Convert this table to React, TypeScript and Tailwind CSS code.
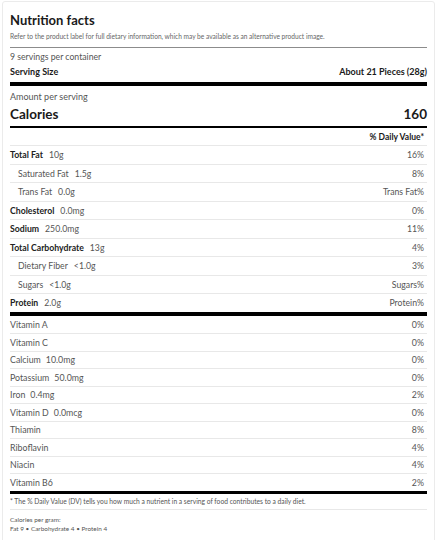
const nutrients = [
  { label: "Total Fat", amount: "10g", dv: "16%", bold: true },
  { label: "Saturated Fat", amount: "1.5g", dv: "8%", sub: true },
  { label: "Trans Fat", amount: "0.0g", dv: "Trans Fat%", sub: true },
  { label: "Cholesterol", amount: "0.0mg", dv: "0%", bold: true },
  { label: "Sodium", amount: "250.0mg", dv: "11%", bold: true },
  { label: "Total Carbohydrate", amount: "13g", dv: "4%", bold: true },
  { label: "Dietary Fiber", amount: "<1.0g", dv: "3%", sub: true },
  { label: "Sugars", amount: "<1.0g", dv: "Sugars%", sub: true },
  { label: "Protein", amount: "2.0g", dv: "Protein%", bold: true },
];

const vitamins = [
  { label: "Vitamin A", amount: "", dv: "0%" },
  { label: "Vitamin C", amount: "", dv: "0%" },
  { label: "Calcium", amount: "10.0mg", dv: "0%" },
  { label: "Potassium", amount: "50.0mg", dv: "0%" },
  { label: "Iron", amount: "0.4mg", dv: "2%" },
  { label: "Vitamin D", amount: "0.0mcg", dv: "0%" },
  { label: "Thiamin", amount: "", dv: "8%" },
  { label: "Riboflavin", amount: "", dv: "4%" },
  { label: "Niacin", amount: "", dv: "4%" },
  { label: "Vitamin B6", amount: "", dv: "2%" },
];

export default function App() {
  return (
    <div className="w-[437px] h-[540px] overflow-hidden bg-white pt-[1px] px-[2px] font-['Lato',sans-serif] text-[#555]">
      <div className="h-[600px] border border-[#ebebeb] rounded-[3px] px-[7px]">
        <h2 className="mt-[10px] text-[13px] leading-[16px] font-bold text-[#1a1a1a]">
          Nutrition facts
        </h2>
        <p className="mt-[4px] text-[6.6px] leading-[8px] text-[#666]">
          Refer to the product label for full dietary information, which may be available as an alternative product image.
        </p>
        <div className="mt-[7px] h-px bg-[#8c8c8c]" />

        <div className="mt-[3px] text-[8.7px] leading-[12px]">9 servings per container</div>
        <div className="mt-[3px] flex justify-between text-[9px] leading-[12px] font-bold text-[#1a1a1a]">
          <span>Serving Size</span>
          <span>About 21 Pieces (28g)</span>
        </div>
        <div className="mt-[4px] h-[4px] bg-black" />

        <div className="mt-[5px] text-[9px] leading-[12px]">Amount per serving</div>
        <div className="mt-[3px] flex justify-between text-[13.5px] leading-[16px] font-bold text-[#1a1a1a]">
          <span>Calories</span>
          <span>160</span>
        </div>
        <div className="mt-[4px] h-[2px] bg-black" />

        <div className="mt-[3px] text-right text-[8.5px] leading-[12px] font-bold text-[#1a1a1a] pr-[3px]">
          % Daily Value*
        </div>

        <div className="mt-[2px]">
          {nutrients.map((n) => (
            <div
              key={n.label}
              className="h-[18.5px] border-t border-[#e8e8e8] flex items-center justify-between text-[8.7px] pr-[3px]"
            >
              <span className={n.sub ? "pl-[8px]" : ""}>
                <span className={n.bold ? "font-bold text-[#222]" : ""}>{n.label}</span>
                <span className="ml-[6px]">{n.amount}</span>
              </span>
              <span>{n.dv}</span>
            </div>
          ))}
        </div>
        <div className="h-[4px] bg-black" />

        <div>
          {vitamins.map((v, i) => (
            <div
              key={v.label}
              className={
                "h-[17.5px] flex items-center justify-between text-[8.8px] pr-[3px] " +
                (i > 0 ? "border-t border-[#e8e8e8]" : "")
              }
            >
              <span>
                {v.label}
                {v.amount && <span className="ml-[5px]">{v.amount}</span>}
              </span>
              <span>{v.dv}</span>
            </div>
          ))}
        </div>
        <div className="h-[3px] bg-black" />

        <div className="h-[16px] flex items-center text-[6.7px] border-b border-[#e8e8e8]">
          * The % Daily Value (DV) tells you how much a nutrient in a serving of food contributes to a daily diet.
        </div>
        <div className="mt-[5px] text-[6.4px] leading-[9px]">
          <div>Calories per gram:</div>
          <div>Fat 9 • Carbohydrate 4 • Protein 4</div>
        </div>
      </div>
    </div>
  );
}
